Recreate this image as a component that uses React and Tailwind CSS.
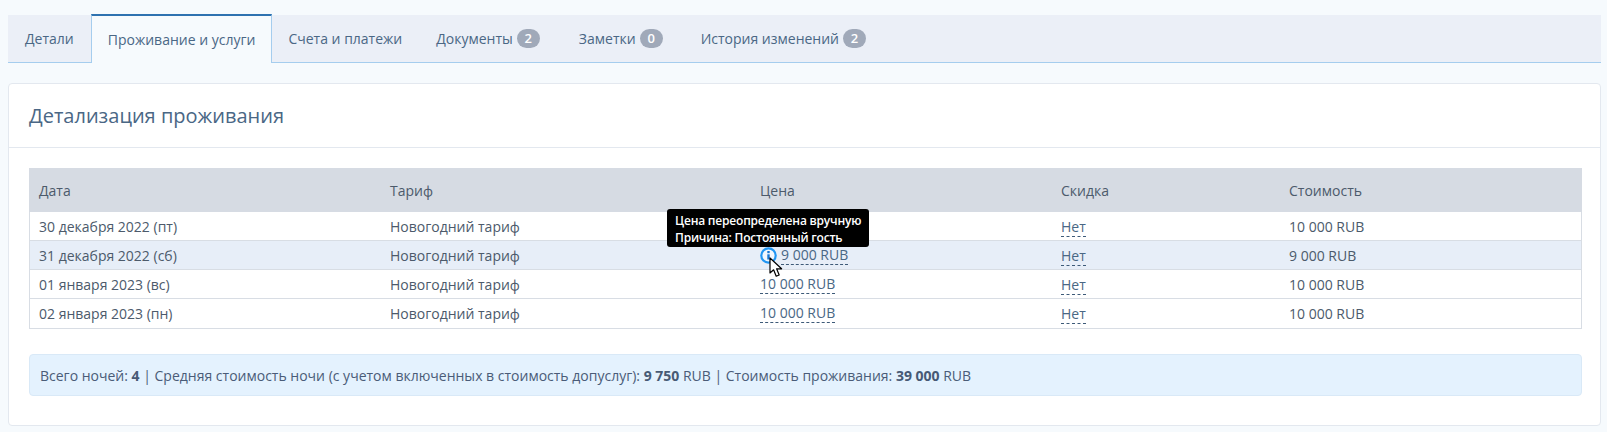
const rows = [
  ["30 декабря 2022 (пт)", "10 000 RUB", "10 000 RUB", false],
  ["31 декабря 2022 (сб)", "9 000 RUB", "9 000 RUB", true],
  ["01 января 2023 (вс)", "10 000 RUB", "10 000 RUB", false],
  ["02 января 2023 (пн)", "10 000 RUB", "10 000 RUB", false],
];

function Badge({ children }) {
  return <span className="ml-[4px] inline-block h-[19px] w-[23px] rounded-full bg-[#a0a9b9] text-center text-[13px] leading-[19px] font-semibold text-white">{children}</span>;
}

export default function App() {
  const tab = "flex h-[47px] items-center text-[14px] text-[#4a6785]";
  return (
    <div className="h-[432px] w-[1607px] overflow-hidden bg-[#f6fafd] px-[8px] pt-[15px] font-['Open_Sans',sans-serif] text-[14px] text-[#4c5a6b]">
      <div className="flex h-[48px] w-[1593px] items-start border-b border-[#a5cdee] bg-[#ebeff7]">
        <div className={tab + " px-[17px]"}>Детали</div>
        <div className="-mt-px flex h-[49px] items-center border-x border-t-2 border-x-[#a5cdee] border-t-[#2e72b0] bg-[#f6fafd] px-[16px] text-[14px] text-[#4a6785]">Проживание и услуги</div>
        <div className={tab + " pr-[17px] pl-[16px]"}>Счета и платежи</div>
        <div className={tab + " pr-[22px] pl-[17px]"}>Документы<Badge>2</Badge></div>
        <div className={tab + " pr-[21px] pl-[17px]"}>Заметки<Badge>0</Badge></div>
        <div className={tab + " px-[17px]"}>История изменений<Badge>2</Badge></div>
      </div>
      <div className="mt-[20px] h-[343px] w-[1593px] rounded-[4px] border border-[#e3e8ef] bg-white">
        <div className="flex h-[64px] items-center border-b border-[#e3e8ef] px-[20px] text-[20px] text-[#4a6785]">Детализация проживания</div>
        <div className="pt-[20px] pr-[18px] pl-[20px]">
          <div className="border border-t-0 border-[#d8dde4]">
            <div className="-mx-px grid h-[44px] grid-cols-[351px_370px_301px_228px_1fr] items-center bg-[#d6dbe3] pl-[10px]">
              <div>Дата</div><div>Тариф</div><div>Цена</div><div>Скидка</div><div>Стоимость</div>
            </div>
            {rows.map((r) => (
              <div key={r[0]} className={"grid h-[29px] grid-cols-[351px_370px_301px_228px_1fr] items-center border-b border-[#d8dde4] pl-[9px] last:border-b-0 " + (r[3] ? "bg-[#e7eef8]" : "bg-white")}>
                <div>{r[0]}</div>
                <div>Новогодний тариф</div>
                <div className="relative flex items-center">
                  {r[3] && (
                    <>
                      <svg viewBox="0 0 17 17" className="mr-[4px] h-[17px] w-[17px]"><circle cx="8.5" cy="8.5" r="7.2" fill="#f1f7fe" stroke="#2196f3" strokeWidth="2.2" /><rect x="7.3" y="7.3" width="2.4" height="5.2" fill="#1976d2" /><rect x="7.3" y="4" width="2.4" height="2.2" fill="#1976d2" /></svg>
                      <svg viewBox="0 0 14 21" className="absolute top-[11px] left-[9px] z-20 h-[21px] w-[14px]"><path d="M1 1v15l3.6-3.2 2.6 6.4 3-1.2-2.6-6.2h5z" fill="#fff" stroke="#000" strokeWidth="1.2" strokeLinejoin="round" /></svg>
                      <div className="absolute bottom-[18px] left-[-93px] z-10 w-[202px] rounded-[3px] bg-black px-[8px] pt-[3px] pb-[1px] text-[12px] leading-[17px] font-semibold tracking-[-0.2px] whitespace-nowrap text-white">
                        <div>Цена переопределена вручную</div>
                        <div>Причина: Постоянный гость</div>
                      </div>
                    </>
                  )}
                  <span className="border-b border-dashed border-[#3d5a78] leading-[18px] text-[#4a6785]">{r[1]}</span>
                </div>
                <div><span className="inline-block border-b border-dashed border-[#3d5a78] leading-[18px] text-[#4a6785]">Нет</span></div>
                <div>{r[2]}</div>
              </div>
            ))}
          </div>
          <div className="mt-[25px] flex h-[42px] items-center rounded-[4px] border border-[#d9e9f7] bg-[#e4f2fe] px-[10px] text-[#4a5c78]">
            <span>Всего ночей: <b className="text-[#475a75]">4</b> | Средняя стоимость ночи (с учетом включенных в стоимость допуслуг): <b className="text-[#475a75]">9 750</b> RUB | Стоимость проживания: <b className="text-[#475a75]">39 000</b> RUB</span>
          </div>
        </div>
      </div>
    </div>
  );
}
